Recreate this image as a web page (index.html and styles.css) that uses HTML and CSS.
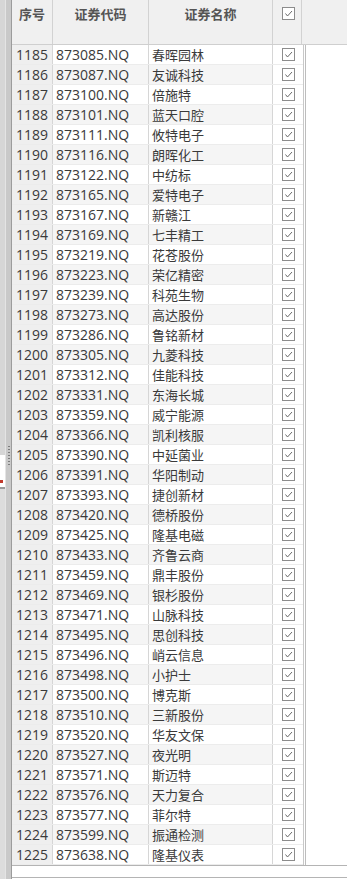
FILE: index.html
```html
<!DOCTYPE html>
<html>
<head>
<meta charset="utf-8">
<link rel="stylesheet" href="styles.css">
</head>
<body>
<div class="app">
  <div class="side">
    <div class="side-top"></div>
    <div class="side-box"><span class="dot"></span></div>
    <div class="side-rest"></div>
  </div>
  <div class="splitter"><div class="grip"></div></div>
  <div class="grid">
    <div class="head">
      <div class="hc c1">序号</div>
      <div class="hc c2">证券代码</div>
      <div class="hc c3">证券名称</div>
      <div class="hc c4"><span class="cb"><svg viewBox="0 0 13 13" width="13" height="13"><polyline points="3.5,6.5 5.5,9 10,4" fill="none" stroke="#6a6a6a" stroke-width="1"/></svg></span></div>
      <div class="hc cfill"></div>
    </div>
    <div class="body">
      <div class="table" id="rows"></div>
      <div class="rest"></div>
    </div>
    <div class="foot"></div>
  </div>
</div>
<script src="app.js"></script>
</body>
</html>
```
FILE: app.js
```js
const data = [
["1185","873085","春晖园林"],["1186","873087","友诚科技"],["1187","873100","倍施特"],["1188","873101","蓝天口腔"],
["1189","873111","攸特电子"],["1190","873116","朗晖化工"],["1191","873122","中纺标"],["1192","873165","爱特电子"],
["1193","873167","新赣江"],["1194","873169","七丰精工"],["1195","873219","花苍股份"],["1196","873223","荣亿精密"],
["1197","873239","科苑生物"],["1198","873273","高达股份"],["1199","873286","鲁铭新材"],["1200","873305","九菱科技"],
["1201","873312","佳能科技"],["1202","873331","东海长城"],["1203","873359","威宁能源"],["1204","873366","凯利核服"],
["1205","873390","中延菌业"],["1206","873391","华阳制动"],["1207","873393","捷创新材"],["1208","873420","德桥股份"],
["1209","873425","隆基电磁"],["1210","873433","齐鲁云商"],["1211","873459","鼎丰股份"],["1212","873469","银杉股份"],
["1213","873471","山脉科技"],["1214","873495","思创科技"],["1215","873496","峭云信息"],["1216","873498","小护士"],
["1217","873500","博克斯"],["1218","873510","三新股份"],["1219","873520","华友文保"],["1220","873527","夜光明"],
["1221","873571","斯迈特"],["1222","873576","天力复合"],["1223","873577","菲尔特"],["1224","873599","振通检测"],
["1225","873638","隆基仪表"]
];
const check = '<span class="cb"><svg viewBox="0 0 13 13" width="13" height="13"><polyline points="3.5,6.5 5.5,9 10,4" fill="none" stroke="#6a6a6a" stroke-width="1"/></svg></span>';
const host = document.getElementById('rows');
host.innerHTML = data.map((r, i) =>
  `<div class="row${i % 2 ? ' alt' : ''}"><div class="c c1">${r[0]}</div><div class="c c2">${r[1]}.NQ</div><div class="c c3">${r[2]}</div><div class="c c4">${check}</div></div>`
).join('');
```
FILE: styles.css
```css
html, body {
  margin: 0;
  padding: 0;
  background: #ffffff;
}
.app {
  display: flex;
  width: 347px;
  height: 879px;
  overflow: hidden;
  font-family: "Open Sans", "Noto Sans CJK SC", sans-serif;
  color: #3a3a3a;
}
.side {
  width: 5px;
  display: flex;
  flex-direction: column;
  background: #d9d9d9;
}
.side-top {
  height: 455px;
  flex-shrink: 0;
  background: #d6d6d6;
}
.side-box {
  height: 32px;
  flex-shrink: 0;
  background: #ffffff;
  border-bottom: 2px solid #9a9a9a;
  position: relative;
}
.dot {
  position: absolute;
  left: 0;
  top: 25px;
  width: 3px;
  height: 3px;
  background: #c0392b;
}
.side-rest {
  flex: 1;
  background: #dcdcdc;
}
.splitter {
  width: 5px;
  background: #c9c9c9;
  border-left: 1px solid #e4e4e4;
  display: flex;
  flex-direction: column;
  align-items: center;
}
.grip {
  margin-top: 445px;
  width: 2px;
  height: 20px;
  background-image: radial-gradient(circle, #7d7d7d 0.8px, transparent 1px);
  background-size: 2px 3px;
}
.grid {
  flex: 1;
  display: flex;
  flex-direction: column;
  border-left: 1px solid #9c9c9c;
  background: #ffffff;
}
.head {
  display: flex;
  height: 44px;
  flex-shrink: 0;
  background: #f0f0f0;
  border-bottom: 1px solid #cfcfcf;
}
.hc {
  box-sizing: border-box;
  border-right: 1px solid #d2d2d2;
  text-align: center;
  padding-top: 4px;
  font-family: "Noto Sans CJK SC", sans-serif;
  font-size: 13px;
  font-weight: 700;
  color: #555555;
  line-height: 20px;
}
.hc.cfill {
  flex: 1;
  border-right: none;
}
.c1 { width: 41px; }
.c2 { width: 96px; }
.c3 { width: 124px; }
.c4 { width: 29px; }
.hc.c4 {
  padding-top: 7px;
  text-align: left;
  padding-left: 9px;
  line-height: 0;
}
.body {
  display: flex;
  height: 820px;
  flex-shrink: 0;
}
.table {
  width: 291px;
  border-right: 1px solid #c8c8c8;
}
.rest {
  flex: 1;
  border-left: 1px solid #bdbdbd;
  margin-left: 1px;
}
.row {
  display: flex;
  height: 20px;
  border-bottom: 1px solid #ececec;
  box-sizing: border-box;
}
.c {
  box-sizing: border-box;
  border-right: 1px solid #d6d6d6;
  font-size: 14px;
  line-height: 20px;
  white-space: nowrap;
  overflow: hidden;
}
.c.c4 { border-right: none; }
.c.c1 {
  background: #efefef;
  padding-left: 4px;
}
.c.c2 {
  padding-left: 3px;
}
.c.c3 {
  font-family: "Noto Sans CJK SC", sans-serif;
  font-size: 13px;
  padding-left: 3px;
}
.row.alt .c2,
.row.alt .c3 {
  background: #f5f5f5;
}
.c.c4 {
  padding-left: 9px;
  padding-top: 3px;
  line-height: 0;
}
.cb {
  display: inline-block;
  width: 13px;
  height: 13px;
  box-sizing: border-box;
  border: 1px solid #8c8c8c;
  background: #ffffff;
  line-height: 0;
}
.cb svg {
  margin: -1px 0 0 -1px;
}
.foot {
  height: 11px;
  flex-shrink: 0;
  border-top: 1px solid #b4b4b4;
  border-bottom: 1px solid #b4b4b4;
  background: #ffffff;
}
```
